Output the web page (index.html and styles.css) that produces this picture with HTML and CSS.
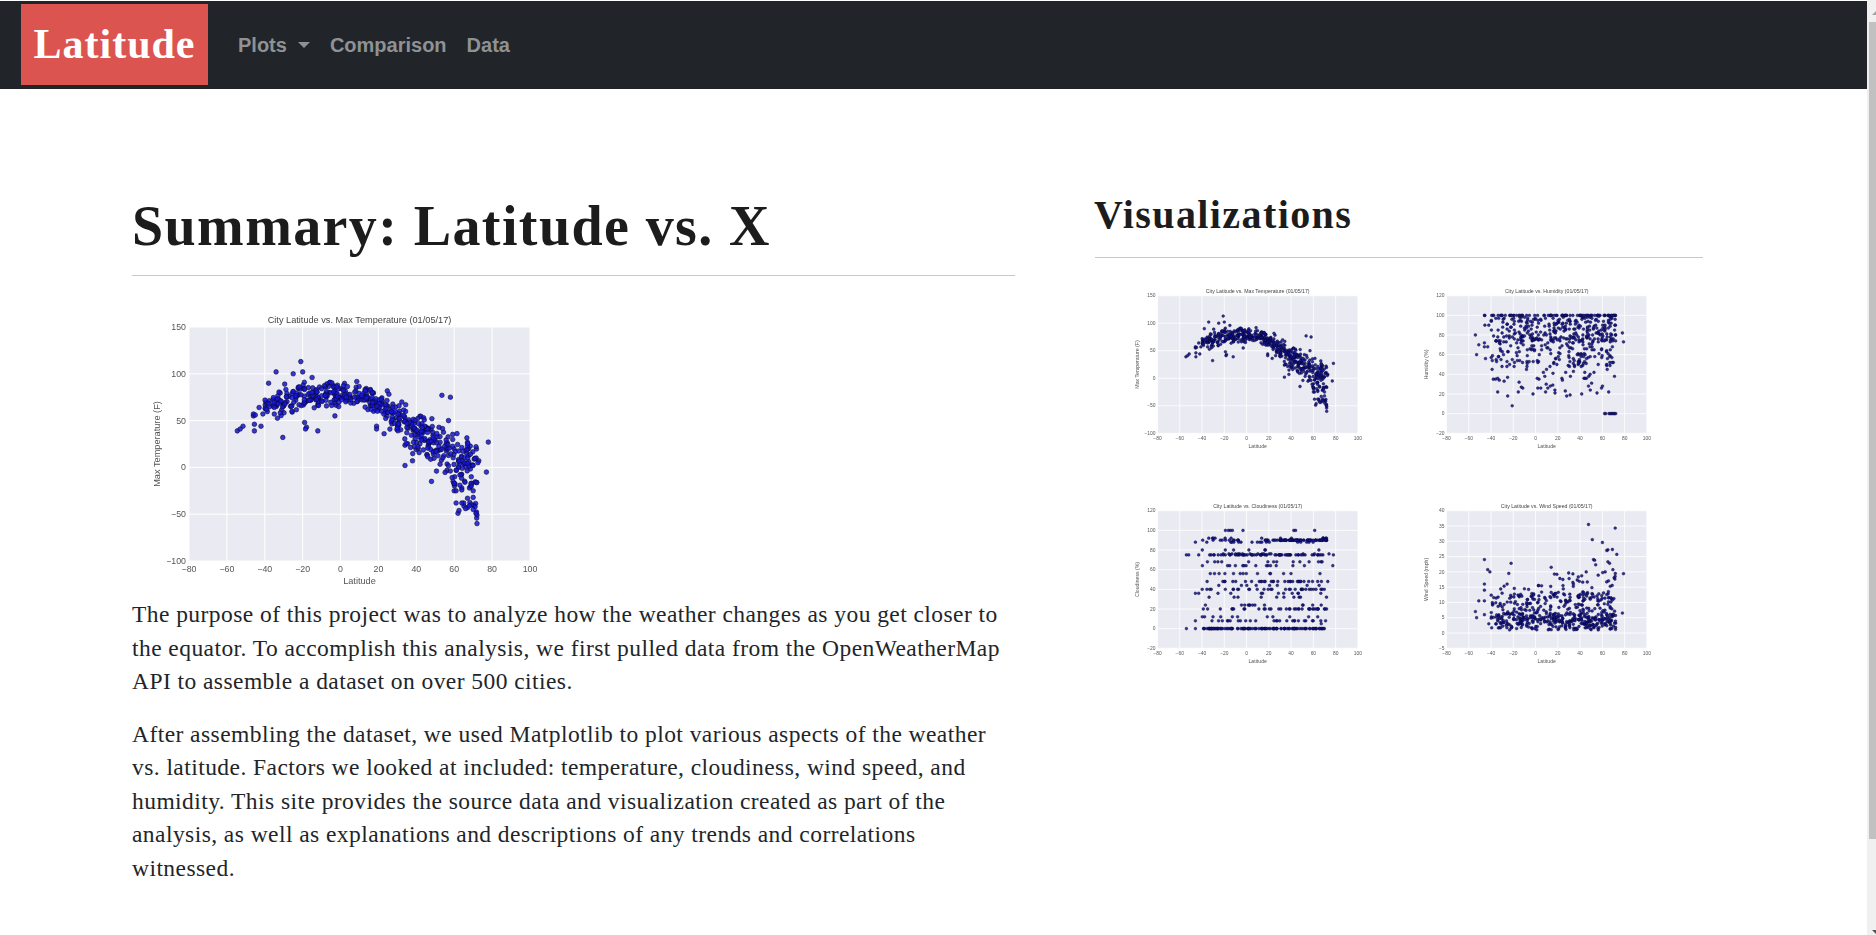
FILE: index.html
```html
<!DOCTYPE html>
<html lang="en">
<head>
<meta charset="utf-8">
<title>Latitude</title>
<link rel="stylesheet" href="styles.css">
</head>
<body>
<div class="app">
  <div class="page">
    <nav class="navbar">
      <a class="brand" href="#">Latitude</a>
      <ul class="nav-links">
        <li><a href="#" class="nav-link">Plots<span class="caret"></span></a></li>
        <li><a href="#" class="nav-link">Comparison</a></li>
        <li><a href="#" class="nav-link">Data</a></li>
      </ul>
    </nav>
    <main class="content">
      <section class="summary">
        <h1 class="summary-title">Summary: Latitude vs. X</h1>
        <hr class="rule">
        <svg class="chart chart-main" data-chart="temp" data-size="main" width="440" height="302"></svg>
        <p class="body-text">The purpose of this project was to analyze how the weather changes as you get closer to the equator. To accomplish this analysis, we first pulled data from the OpenWeatherMap API to assemble a dataset on over 500 cities.</p>
        <p class="body-text">After assembling the dataset, we used Matplotlib to plot various aspects of the weather vs. latitude. Factors we looked at included: temperature, cloudiness, wind speed, and humidity. This site provides the source data and visualization created as part of the analysis, as well as explanations and descriptions of any trends and correlations witnessed.</p>
      </section>
      <aside class="visuals">
        <h2 class="visuals-title">Visualizations</h2>
        <hr class="rule">
        <div class="thumbs">
          <svg class="chart chart-thumb" data-chart="temp" data-size="thumb" width="259" height="178"></svg>
          <svg class="chart chart-thumb" data-chart="humidity" data-size="thumb" width="259" height="178"></svg>
          <svg class="chart chart-thumb" data-chart="cloud" data-size="thumb" width="259" height="178"></svg>
          <svg class="chart chart-thumb" data-chart="wind" data-size="thumb" width="259" height="178"></svg>
        </div>
      </aside>
    </main>
  </div>
  <div class="scrollbar">
    <span class="arrow arrow-up"></span>
    <span class="thumb"></span>
    <span class="arrow arrow-down"></span>
  </div>
</div>
<script src="charts.js"></script>
</body>
</html>
```
FILE: styles.css
```css
* { box-sizing: border-box; }
html, body { margin: 0; height: 935px; overflow: hidden; background: #fff; }
.app { display: flex; height: 935px; }
.page { flex: 1; min-width: 0; padding-top: 1px; }
.navbar {
  display: flex;
  align-items: center;
  height: 88px;
  padding: 0 0 1px 21px;
  background: #212529;
}
.brand {
  display: block;
  width: 187px;
  height: 81px;
  background: #dc5450;
  color: #fff;
  font: bold 42px/81px "Liberation Serif", serif;
  text-align: center;
  text-decoration: none;
  letter-spacing: 1px;
}
.nav-links {
  display: flex;
  gap: 20px;
  margin: 0 0 0 30px;
  padding: 0;
  list-style: none;
}
.nav-link {
  display: flex;
  align-items: center;
  color: #8f9294;
  font: bold 20px/24px "Liberation Sans", Arial, sans-serif;
  text-decoration: none;
}
.caret {
  width: 0;
  height: 0;
  margin-left: 11px;
  border-top: 6px solid #8f9294;
  border-left: 6px solid transparent;
  border-right: 6px solid transparent;
}
.content {
  display: grid;
  grid-template-columns: 883px 609px;
  column-gap: 79px;
  padding: 0 0 0 132px;
}
.summary-title {
  margin: 0;
  padding-top: 107px;
  color: #1c1c1c;
  font: bold 56px/60px "Liberation Serif", serif;
  letter-spacing: 1.4px;
}
.visuals-title {
  margin: 0;
  padding-top: 104px;
  color: #1c1c1c;
  font: bold 40px/44px "Liberation Serif", serif;
  letter-spacing: 1.4px;
}
.rule { margin: 0; border: 0; border-top: 1px solid #c8c8c8; height: 1px; }
.summary .rule { margin-top: 19px; }
.visuals .rule { margin-top: 20px; margin-left: 1px; }
.chart { display: block; overflow: visible; }
.chart-main { margin-top: 20px; filter: blur(0.4px); }
.chart-thumb { filter: blur(0.6px); }
.thumbs {
  display: grid;
  grid-template-columns: 259px 259px;
  grid-auto-rows: 178px;
  column-gap: 30px;
  row-gap: 37px;
  margin: 21px 0 0 31px;
}
.body-text {
  margin: 0 0 19px;
  color: #212529;
  font: 23.5px/33.5px "Liberation Serif", serif;
  letter-spacing: 0.44px;
}
.bg { fill: #eaeaf2; }
.grid { stroke: #fff; }
.dot { fill: #1515d8; fill-opacity: 0.85; stroke: #0a0a30; stroke-width: 0.6; }
.chart-thumb .dot { fill: #10108c; stroke: #06062a; stroke-width: 0.4; }
.lbl { fill: #555; font-family: "Liberation Sans", Arial, sans-serif; }
.ttl { fill: #444; }
.scrollbar {
  position: relative;
  flex: 0 0 9px;
  background: #f0f0f0;
}
.thumb {
  position: absolute;
  top: 22px;
  left: 2px;
  right: 0;
  height: 817px;
  background: #c1c1c1;
}
.arrow { position: absolute; right: 0; width: 0; height: 0; border-left: 4px solid transparent; }
.arrow-up { top: 11px; border-bottom: 4px solid #a3a3a3; }
.arrow-down { top: 930px; border-top: 4px solid #505050; }
```
FILE: charts.js
```js
(function () {
  var NS = 'http://www.w3.org/2000/svg';
  var seed = 12345;
  function rnd() {
    seed = (seed * 1664525 + 1013904223) % 4294967296;
    return seed / 4294967296;
  }
  function tri() { return rnd() + rnd() - 1; }
  function interp(tbl, x) {
    for (var i = 1; i < tbl.length; i++) {
      if (x <= tbl[i][0]) {
        var a = tbl[i - 1], b = tbl[i];
        return a[1] + (b[1] - a[1]) * (x - a[0]) / (b[0] - a[0]);
      }
    }
    return tbl[tbl.length - 1][1];
  }

  var curve = [[-60, 50], [-40, 62], [-30, 70], [-20, 75], [-10, 78], [0, 78], [10, 78], [20, 72], [30, 54], [40, 37], [50, 26], [60, 8], [72, -6], [80, -10]];
  var spread = [[-60, 10], [-30, 20], [-10, 16], [10, 14], [22, 20], [40, 30], [52, 30], [60, 50], [72, 60], [80, 40]];
  var bands = [[-40, -25, 55], [-25, -10, 65], [-10, 10, 85], [10, 30, 95], [30, 50, 125], [50, 72, 120]];
  var lats = [];
  bands.forEach(function (b) {
    for (var i = 0; i < b[2]; i++) lats.push(b[0] + (b[1] - b[0]) * rnd());
  });

  var temp = lats.map(function (la) {
    var v = interp(curve, la) + tri() * interp(spread, la);
    if (la > 58) {
      var cap = 43 - (la - 58) * 1.2;
      if (v > cap) v = cap - rnd() * 30;
    }
    return [la, v];
  }).concat([
    [-54.5, 39], [-53, 41], [-51.5, 44], [-46, 55], [-46, 57], [-45, 56], [-45.5, 46], [-45.5, 39], [-43, 64], [-42, 44], [-41, 57], [-39, 62], [-38, 68], [-35, 57],
    [-34, 102], [-38, 90], [-25, 100], [-21, 113], [-20, 102], [-15, 96], [-30.5, 32], [-19, 48], [-18, 43], [-18.5, 41], [-12, 39], [-3, 55],
    [53.5, 77], [58, 75], [57, 50], [78, 27], [77, -5], [73, 7], [72.5, 5], [72, -60], [72, -51], [71.5, -49], [62, -49], [62.5, -46], [34, 2], [38, 7], [48, -15], [19, 44], [19, 41], [23, 36],
    [60, -25], [61, -25], [64, -22], [64, -24], [68, -22], [69, -20], [70, -25], [70, -32], [67, -33], [65, -38], [64, -38], [61, -38], [69, -40], [71, -42], [67, -43], [66, -44], [68, -41], [70, -45], [63, -19], [60, -17], [63, -8], [69, -10]
  ]);

  var hum = lats.map(function (la) {
    var r = rnd(), v;
    if (r < 0.14) v = 100;
    else if (r < 0.62) v = 72 + 27 * rnd();
    else if (r < 0.9) v = 48 + 30 * rnd();
    else v = 18 + 30 * rnd();
    return [la, Math.round(v)];
  }).concat([
    [-54, 80], [-53, 60], [-51, 70], [-46, 100], [-45.5, 100], [-45.5, 90], [-46, 72], [-46, 68], [-45, 56], [-43, 68], [-42, 90], [-39, 45], [-38, 35], [-36, 35], [-34, 22],
    [-25, 18], [-21, 8], [62, 0], [63, 0], [66, 0], [67, 0], [68, 0], [69, 0], [70, 0], [71, 0], [72, 0], [78, 82], [79, 73], [28, 18], [31, 19], [2, 26], [9, 22], [11, 26]
  ]);

  var cloudVals = [0, 0, 0, 0, 0, 0, 0, 8, 8, 12, 20, 20, 20, 24, 32, 36, 40, 40, 44, 48, 48, 56, 64, 68, 75, 75, 75, 75, 76, 80, 88, 90, 90, 92, 100];
  var cloud = lats.map(function (la) {
    if (la > 30 && rnd() < 0.2) return [la, 90];
    return [la, cloudVals[Math.floor(rnd() * cloudVals.length)]];
  }).concat([
    [-54, 0], [-54, 75], [-52, 75], [-46, 88], [-46, 36], [-46, 8], [-46, 0], [-43, 36], [-43, 75], [-37, 24], [78, 75], [77.5, 64], [73, 48], [74, 76], [67, 5]
  ]);

  var wind = lats.map(function (la) {
    var r = rnd(), v;
    if (r < 0.45) v = 1 + 5.5 * rnd();
    else if (r < 0.85) v = 3 + 10 * rnd();
    else v = 9 + (la > 10 ? 11 : 7) * rnd();
    return [la, v];
  }).concat([
    [-54, 7], [-53, 5], [-51, 10.5], [-46, 24], [-46, 16], [-46, 14], [-46, 10.5], [-46, 6], [-43, 20.7], [-41, 20], [-42, 3], [-22, 22.8], [-24, 19.5],
    [47.5, 35.5], [71.5, 34.3], [51, 30.5], [60, 29.6], [69, 27.3], [64, 27], [65, 27.2], [73, 25.7], [52, 24], [53, 23.8], [65, 23.3], [66.5, 22.8], [54, 22.3], [14, 21.5], [69.5, 20.7], [79, 19.4], [78, 6.5]
  ]);

  var charts = {
    temp: { title: 'City Latitude vs. Max Temperature (01/05/17)', y: 'Max Temperature (F)', lo: -100, hi: 150, step: 50, pts: temp },
    humidity: { title: 'City Latitude vs. Humidity (01/05/17)', y: 'Humidity (%)', lo: -20, hi: 120, step: 20, pts: hum },
    cloud: { title: 'City Latitude vs. Cloudiness (01/05/17)', y: 'Cloudiness (%)', lo: -20, hi: 120, step: 20, pts: cloud },
    wind: { title: 'City Latitude vs. Wind Speed (01/05/17)', y: 'Wind Speed (mph)', lo: -5, hi: 40, step: 5, pts: wind }
  };
  var sizes = {
    main: { l: 57, t: 31, w: 341, h: 234, font: 9.2, tick: 8.8, r: 2.3, gw: 1, tx: 3, ty: 8, xl: 20, yl: 29, tt: 4.9 },
    thumb: { l: 32.5, t: 16.7, w: 200.4, h: 137.6, font: 5.2, tick: 4.9, r: 1.4, gw: 0.8, tx: 2, ty: 5, xl: 12.4, yl: 18.7, tt: 3.2 }
  };

  function el(parent, name, attrs, text) {
    var e = document.createElementNS(NS, name);
    for (var k in attrs) e.setAttribute(k, attrs[k]);
    if (text !== undefined) e.textContent = text;
    parent.appendChild(e);
    return e;
  }

  document.querySelectorAll('svg[data-chart]').forEach(function (svg) {
    var c = charts[svg.dataset.chart], s = sizes[svg.dataset.size];
    var X = function (v) { return s.l + (v + 80) / 180 * s.w; };
    var Y = function (v) { return s.t + (c.hi - v) / (c.hi - c.lo) * s.h; };
    el(svg, 'rect', { 'class': 'bg', x: s.l, y: s.t, width: s.w, height: s.h });
    var v;
    for (v = -80; v <= 100; v += 20) {
      el(svg, 'line', { 'class': 'grid', x1: X(v), x2: X(v), y1: s.t, y2: s.t + s.h, 'stroke-width': s.gw });
      el(svg, 'text', { 'class': 'lbl', x: X(v), y: s.t + s.h + s.ty + s.tick * 0.35, 'text-anchor': 'middle', 'font-size': s.tick }, String(v).replace('-', '\u2212'));
    }
    for (v = c.lo; v <= c.hi; v += c.step) {
      el(svg, 'line', { 'class': 'grid', x1: s.l, x2: s.l + s.w, y1: Y(v), y2: Y(v), 'stroke-width': s.gw });
      el(svg, 'text', { 'class': 'lbl', x: s.l - s.tx, y: Y(v) + s.tick * 0.35, 'text-anchor': 'end', 'font-size': s.tick }, String(v).replace('-', '\u2212'));
    }
    c.pts.forEach(function (p) {
      el(svg, 'circle', { 'class': 'dot', cx: X(p[0]).toFixed(1), cy: Y(p[1]).toFixed(1), r: s.r });
    });
    el(svg, 'text', { 'class': 'lbl ttl', x: s.l + s.w / 2, y: s.t - s.tt + s.font * 0.1, 'text-anchor': 'middle', 'font-size': s.font }, c.title);
    el(svg, 'text', { 'class': 'lbl', x: s.l + s.w / 2, y: s.t + s.h + s.xl + s.font * 0.35, 'text-anchor': 'middle', 'font-size': s.font }, 'Latitude');
    var yy = s.t + s.h / 2, xx = s.l - s.yl;
    el(svg, 'text', { 'class': 'lbl', x: xx, y: yy, 'text-anchor': 'middle', 'font-size': s.font, transform: 'rotate(-90 ' + xx + ' ' + yy + ')' }, c.y);
  });
})();
```
